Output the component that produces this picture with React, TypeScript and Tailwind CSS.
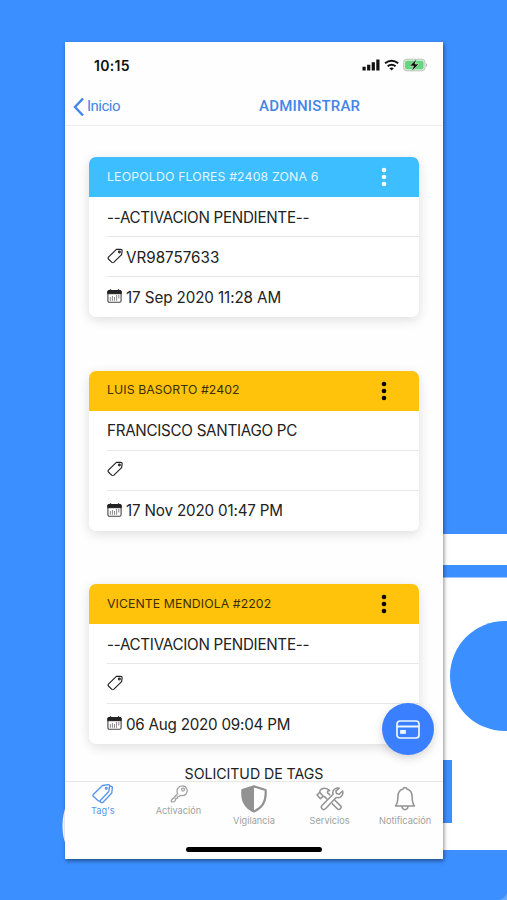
import React from "react";

function TagIcon({ className }: { className?: string }) {
  return (
    <svg viewBox="0 0 16 16" className={className} fill="none" stroke="currentColor" strokeWidth="1.15" strokeLinejoin="round">
      <path d="M9.400 1.400 13.500 1.200Q15.200 1.300 15.100 2.800L14.600 6.600 6.700 14.400Q5.800 15.100 4.900 14.400L1.400 11Q.7 10.100 1.400 9.200Z" />
      <circle cx="12.400" cy="4" r=".9" />
    </svg>
  );
}

function CalendarIcon() {
  return (
    <svg viewBox="0 0 15 14" className="h-[14px] w-[15px] shrink-0" fill="none" stroke="#222">
      <rect x=".9" y="1.700" width="13.200" height="11.500" rx="1.500" strokeWidth="1.100" stroke="#444" />
      <path d="M1.500 1.500h12q.7 0 .7.700v2.500H.8V2.200q0-.7.700-.7z" fill="#222" />
      <path d="M3.500.2v2M11.500.2v2" strokeWidth="1.300" />
      <path d="M3.300 8v3.800M5.400 7v4.800M7.500 8v3.800M9.600 6v5.800M11.800 6v3.500" strokeWidth="1" stroke="#888" />
    </svg>
  );
}

type CardData = { title: string; name: string; tag?: string; date: string; blue?: boolean };

const cards: CardData[] = [
  { title: "LEOPOLDO FLORES #2408 ZONA 6", name: "--ACTIVACION PENDIENTE--", tag: "VR98757633", date: "17 Sep 2020 11:28 AM", blue: true },
  { title: "LUIS BASORTO #2402", name: "FRANCISCO SANTIAGO PC", date: "17 Nov 2020 01:47 PM" },
  { title: "VICENTE MENDIOLA #2202", name: "--ACTIVACION PENDIENTE--", date: "06 Aug 2020 09:04 PM" },
];

function Card({ title, name, tag, date, blue }: CardData) {
  return (
    <article className="h-[160px] shrink-0 overflow-hidden rounded-[7px] bg-white text-[15.2px] text-[#222] shadow-[0_3px_12px_rgba(0,0,0,0.13)]">
      <header className={`flex h-10 items-center justify-between pr-[32px] pl-[18px] text-[12.3px] ${blue ? "bg-[#3dbeff] text-[#e2f6ff]" : "bg-[#fec30a] text-[#3c2e05]"}`}>
        <span className={blue ? "tracking-[0.16px]" : "tracking-[0.08px]"}>{title}</span>
        <svg viewBox="0 0 6 20" className={`h-5 w-1.5 ${blue ? "fill-white" : "fill-black"}`}>
          <circle cx="3" cy="3" r="2.300" />
          <circle cx="3" cy="10" r="2.300" />
          <circle cx="3" cy="17" r="2.300" />
        </svg>
      </header>
      <div className="ml-[18px]">
        <div className="flex h-10 items-center border-b border-[#e7e7e7] pt-[3px] tracking-[-0.29px]">{name}</div>
        <div className="flex h-10 items-center gap-1 border-b border-[#e7e7e7] pt-[3px]">
          <TagIcon className="mb-[5px] size-[16px] shrink-0" />
          <span className="-ml-px">{tag}</span>
        </div>
        <div className="flex h-10 items-center gap-1 pt-[2px]">
          <div className="mb-1"><CalendarIcon /></div>
          <span className={blue ? "tracking-[-0.1px]" : name.startsWith("--") ? "tracking-[-0.23px]" : "tracking-[-0.17px]"}>{date}</span>
        </div>
      </div>
    </article>
  );
}

function Backdrop() {
  return (
    <svg viewBox="0 0 507 900" className="absolute inset-0 h-[900px] w-[507px]">
      <path fill="#fff" d="M430 534h77v31h-77zM430 577.500h77V850h-77zM70 798C60 812 60 842 70 850z" />
      <circle cx="505" cy="676" r="55" fill="#3c8fff" />
      <path fill="#3c8fff" d="M430 760h22v63h-22z" />
      <path fill="#69a8ff" d="M507 893v7h-7q5-2 7-7" />
    </svg>
  );
}

function StatusBar() {
  return (
    <div className="flex h-[46px] shrink-0 items-center justify-between pr-[15px] pl-[29px]">
      <span className="text-[14px] font-semibold tracking-[0.3px] text-[#111]">10:15</span>
      <svg viewBox="0 0 66 14" className="h-[14px] w-[66px]">
        <path fill="#111" d="M.5 8.800h3.200v3.700H.5zM5.100 6.800h3.200v5.700H5.100zM9.700 4.300h3.200v8.200H9.700zM14.300 1.500h3.200v11h-3.200z" />
        <g fill="none" stroke="#111" strokeWidth="2">
          <path d="M23 5.300q6.600-5 13.200 0" />
          <path d="M25.600 8.300q4-3 8 0" />
        </g>
        <path fill="#111" d="m27.400 10.200 2.200 2.300 2.200-2.300q-2.200-1.500-4.400 0" />
        <rect x="41.500" y="1.200" width="21.500" height="11.600" rx="3.300" fill="#dcefdf" stroke="#b8c5ba" />
        <rect x="43" y="2.800" width="18.500" height="8.400" rx="2" fill="#65d67f" />
        <path d="M64 5q2 2 0 4z" fill="#aaa" />
        <path d="M54.800.8 47.500 8h4l-2 5.500 7.500-7.500h-4z" fill="#111" stroke="#dff5e3" strokeWidth=".6" />
      </svg>
    </div>
  );
}

function KeyIcon() {
  return (
    <svg viewBox="0 0 18 18" className="size-[18px]" fill="none" stroke="currentColor" strokeWidth="1.250" strokeLinejoin="round">
      <path d="M7.600 8.600C5.700 4.400 8.600.8 12.400.8c4.200 0 6.200 5 3.600 8.200-1.500 1.700-3.700 2-5.800 1.300l-1.200 1.400-1.500.1-.2 1.700-1.600.2-.3 1.700-1.200 1.300-2.700.1-.3-1.600z" />
      <circle cx="13" cy="4.600" r="1.500" />
      <path d="m3 14.600 5-5" strokeWidth=".7" />
    </svg>
  );
}

function ShieldIcon() {
  return (
    <svg viewBox="0 0 26 28" className="h-[28px] w-[26px]">
      <path d="M13 1.400 24.600 5C25.400 14 22.500 22.500 13 26.500 3.500 22.500.6 14 1.400 5z" fill="none" stroke="currentColor" strokeWidth="2.200" strokeLinejoin="round" />
      <path d="M13 1.400V26.500C3.500 22.500.6 14 1.400 5z" fill="currentColor" />
    </svg>
  );
}

function ToolsIcon() {
  return (
    <svg viewBox="0 0 28 24" className="h-[24px] w-[28px]" fill="none" stroke="currentColor" strokeWidth="1.500" strokeLinejoin="round">
      <path d="M23.200 1.200c-4-1-7.500 2.400-6.100 6L6 18.600c-2 2 1.100 5.400 3.400 3.200L20.200 10.400c4.200 1.200 7.700-2.300 6.400-6.400l-3.400 3.300-2.700-.7-.6-2.500z" />
      <path d="m14.200 8.300-2.500-2.400c-.7-1 .2-2.400 2-2.300C10.300.3 6.400.6 4.300 2.900L3.500 5.600 1 8l3.400 3.800L7 9.400l1.500.2 2.700 2.700M15.900 16.400l5.400 5.400c2 2 5.200-1 3-3.200L18.600 13M4 5.500l3 3.700" />
    </svg>
  );
}

function BellIcon() {
  return (
    <svg viewBox="0 0 22 26" className="h-[26px] w-[22px]" fill="none" stroke="currentColor" strokeWidth="1.500" strokeLinejoin="round" strokeLinecap="round">
      <path d="M9.200 3.100C9.200 1 12.800 1 12.800 3.100c4 .8 5.400 4.400 5.400 8.500 0 4.300.3 6.200 2.300 8.400h-19c2-2.200 2.300-4.100 2.300-8.400 0-4.100 1.400-7.700 5.400-8.500ZM8 20.500c.4 4.200 5.600 4.200 6 0" />
    </svg>
  );
}

function Tab({ icon, label, labelClass, className }: { icon: React.ReactNode; label: string; labelClass: string; className?: string }) {
  return (
    <div className={`flex flex-1 flex-col items-center ${className ?? "text-[#a1a1a1]"}`}>
      {icon}
      <span className={`text-[9.200px] leading-[12px] whitespace-nowrap ${labelClass}`}>{label}</span>
    </div>
  );
}

export default function App() {
  return (
    <main className="relative h-[900px] w-[507px] overflow-hidden bg-[#3c8fff] font-['Inter','Liberation_Sans',sans-serif]">
      <Backdrop />
      <div className="relative pt-[42px] pl-[65px]">
        <section className="relative flex h-[817px] w-[378px] flex-col bg-[#fefefe] shadow-[1px_2px_4px_rgba(0,0,0,0.45)]">
          <StatusBar />
          <nav className="flex h-[38px] shrink-0 items-center border-b border-[#ededed] pl-2 font-['Roboto','Liberation_Sans',sans-serif] text-[#4485e9]">
            <svg viewBox="0 0 12 20" className="h-[20px] w-[12px]" fill="none" stroke="currentColor" strokeWidth="2.400"><path d="m10 1.500-8 8.500 8 8.500" /></svg>
            <span className="ml-[2px] w-[172px] text-[15px] tracking-[-0.5px]">Inicio</span>
            <span className="text-[15px] font-medium tracking-[0.2px]">ADMINISTRAR</span>
          </nav>
          <div className="flex h-[655px] shrink-0 flex-col gap-[53.500px] overflow-hidden px-6 pt-[31px]">
            {cards.map((card) => <Card key={card.title} {...card} />)}
            <p className="-mt-[34px] shrink-0 text-center text-[14.200px] leading-[20px] tracking-[-0.05px] text-[#222]">SOLICITUD DE TAGS</p>
          </div>
          <footer className="flex h-[65px] shrink-0 border-t border-[#e7e7e7] bg-[#fefefe] pt-[2px]">
            <Tab className="text-[#5594ef]" icon={
              <svg viewBox="0 0 22 20" className="h-[20px] w-[22px]" fill="none" stroke="currentColor" strokeWidth="1.350" strokeLinejoin="round">
                <path d="m10.500 1.500 6-.8q1.200-.1 1.100 1.100l-.8 5.700-8.700 9.200q-.9.800-1.900 0l-4.900-4.500q-.8-.8 0-1.700zM18 2l2.400.8-.6 6.200L11 18.200q-1 .8-2 .2l-1-1" />
                <circle cx="14.300" cy="4.200" r=".9" />
              </svg>
            } label="Tag's" labelClass="mt-[1px]" />
            <Tab icon={<div className="h-[21px] pt-px pl-[1px]"><KeyIcon /></div>} label="Activación" labelClass="" />
            <Tab icon={<div className="h-[31px] pt-px text-[#929292]"><ShieldIcon /></div>} label="Vigilancia" labelClass="" />
            <Tab icon={<div className="h-[31px] pt-[3px] text-[#929292]"><ToolsIcon /></div>} label="Servicios" labelClass="" />
            <Tab icon={<div className="h-[31px] pt-[2px] text-[#929292]"><BellIcon /></div>} label="Notificación" labelClass="" />
          </footer>
          <div className="mt-[1px] ml-[121px] h-[5px] w-[136px] shrink-0 rounded-full bg-black" />
          <button className="absolute top-[661px] left-[317px] flex size-[52px] items-center justify-center rounded-full bg-[#397fff] shadow-[0_3px_10px_rgba(0,0,0,0.17)]" aria-label="Solicitud de tags">
            <svg viewBox="0 0 24 19" className="h-[19px] w-[24px]" fill="none" stroke="#eef7ff" strokeWidth="1.700">
              <rect x="1" y="1" width="22" height="17" rx="3" />
              <path d="M1 6.500h22" strokeWidth="2" />
              <rect x="5" y="10.800" width="4" height="2.200" fill="#eef7ff" />
            </svg>
          </button>
        </section>
      </div>
    </main>
  );
}
